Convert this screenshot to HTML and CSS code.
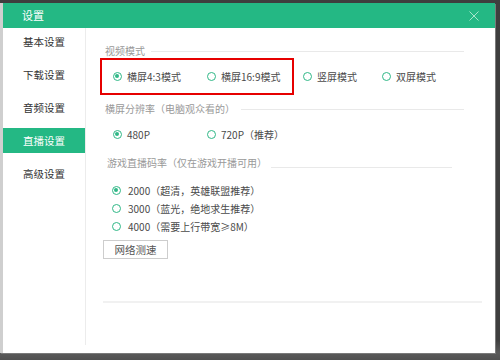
FILE: index.html
```html
<!DOCTYPE html>
<html lang="zh-CN">
<head>
<meta charset="utf-8">
<title>设置</title>
<link rel="stylesheet" href="styles.css">
</head>
<body>
<div class="screen">
  <div class="win">
    <div class="titlebar">
      <span class="title">设置</span>
      <svg class="close" width="10" height="10" viewBox="0 0 10 10"><path d="M0.5 0.5L9.5 9.5M9.5 0.5L0.5 9.5" stroke="#a6e4cb" stroke-width="1" fill="none"/></svg>
    </div>
    <div class="main">
      <nav class="side">
        <div class="item">基本设置</div>
        <div class="item">下载设置</div>
        <div class="item">音频设置</div>
        <div class="item active">直播设置</div>
        <div class="item">高级设置</div>
      </nav>
      <div class="content">
        <div class="sec s1"><span class="sec-t">视频模式</span><i class="rule"></i></div>
        <div class="row1">
          <div class="hl">
            <div class="opt o1"><span class="radio on"></span>横屏4:3模式</div>
            <div class="opt o2"><span class="radio"></span>横屏16:9模式</div>
          </div>
          <div class="opt o3"><span class="radio"></span>竖屏模式</div>
          <div class="opt"><span class="radio"></span>双屏模式</div>
        </div>
        <div class="sec s2"><span class="sec-t">横屏分辨率（电脑观众看的）</span><i class="rule"></i></div>
        <div class="row2">
          <div class="opt o1"><span class="radio on"></span>480P</div>
          <div class="opt"><span class="radio"></span>720P（推荐）</div>
        </div>
        <div class="sec s3"><span class="sec-t">游戏直播码率（仅在游戏开播可用）</span><i class="rule"></i></div>
        <div class="list">
          <div class="opt wide"><span class="radio on"></span>2000（超清，英雄联盟推荐）</div>
          <div class="opt wide"><span class="radio"></span>3000（蓝光，绝地求生推荐）</div>
          <div class="opt wide"><span class="radio"></span>4000（需要上行带宽≥8M）</div>
        </div>
        <div class="btn">网络测速</div>
        <div class="bottom-rule"></div>
      </div>
    </div>
  </div>
</div>
</body>
</html>
```

FILE: styles.css
```css
html, body {
  margin: 0;
  padding: 0;
}
body {
  width: 500px;
  height: 360px;
  overflow: hidden;
  background: #4b4b4b;
  font-family: "Noto Sans CJK SC", "Microsoft YaHei", sans-serif;
  font-size: 10px;
  color: #444;
}
.screen {
  width: 500px;
  height: 360px;
  padding-top: 3px;
  box-sizing: border-box;
  background: linear-gradient(to bottom, #3e3e3e 0, #3e3e3e 340px, #5a5a5a 353px, #505050 360px);
}
.win {
  width: 495px;
  height: 350px;
  box-sizing: border-box;
  border-left: 3px solid #cfcfcf;
  background: #fff;
  display: flex;
  flex-direction: column;
  box-shadow: 1px 1px 0 #7a7a7a;
}
.titlebar {
  height: 25px;
  background: #24b884;
  display: flex;
  align-items: center;
  justify-content: space-between;
  padding: 0 16px 0 19px;
  flex-shrink: 0;
}
.title {
  color: #fff;
  font-size: 11px;
  line-height: 25px;
}
.close {
  display: block;
}
.main {
  flex: 1;
  display: flex;
}
.side {
  width: 83px;
  height: 317px;
  border-right: 1px solid #ececec;
  padding-top: 1px;
  box-sizing: border-box;
  display: flex;
  flex-direction: column;
  gap: 8px;
}
.item {
  height: 25px;
  line-height: 25px;
  text-align: center;
  color: #333;
  font-size: 10.5px;
}
.item.active {
  background: #24b884;
  color: #fff;
}
.content {
  flex: 1;
  display: flex;
  flex-direction: column;
}
.sec {
  height: 14px;
  display: flex;
  align-items: center;
  margin-left: 19px;
  width: 359px;
  color: #999;
}
.sec-t {
  line-height: 14px;
  white-space: nowrap;
}
.rule {
  flex: 1;
  height: 1px;
  background: #e9e9e9;
  margin-left: 6px;
}
.s1 { margin-top: 16px; }
.s2 { margin-top: 7px; }
.s3 { margin-top: 13px; margin-left: 21px; width: 345px; }
.s3 .rule { margin-top: 9px; margin-left: 4px; }
.opt {
  display: flex;
  align-items: center;
  height: 18px;
  white-space: nowrap;
  color: #4a4a4a;
}
.radio {
  width: 9px;
  height: 9px;
  box-sizing: border-box;
  border: 1.5px solid #30b887;
  border-radius: 50%;
  margin-right: 5px;
  position: relative;
  flex-shrink: 0;
}
.radio.on::after {
  content: "";
  position: absolute;
  left: 1px;
  top: 1px;
  width: 4px;
  height: 4px;
  border-radius: 50%;
  background: #30b887;
}
.row1 {
  display: flex;
  align-items: center;
}
.hl {
  margin-left: 14px;
  width: 194px;
  height: 37px;
  box-sizing: border-box;
  border: 2px solid #e60000;
  padding-left: 11px;
  display: flex;
  align-items: center;
}
.o1 { width: 94px; }
.o2 { width: 85px; }
.o3 { width: 79px; margin-left: 10px; }
.hl + .o3 { margin-left: 9px; }
.row2 {
  display: flex;
  margin-left: 27px;
  margin-top: 9px;
}
.list {
  margin-left: 26px;
  margin-top: 11px;
  display: flex;
  flex-direction: column;
}
.wide .radio { margin-right: 7px; }
.btn {
  margin-left: 17px;
  margin-top: 5px;
  width: 65px;
  height: 19px;
  box-sizing: border-box;
  border: 1px solid #cdcdcd;
  text-align: center;
  line-height: 17px;
  color: #555;
  font-size: 10.5px;
}
.bottom-rule {
  margin-left: 17px;
  margin-top: 42px;
  width: 379px;
  height: 2px;
  background: #f1f1f1;
}
```
